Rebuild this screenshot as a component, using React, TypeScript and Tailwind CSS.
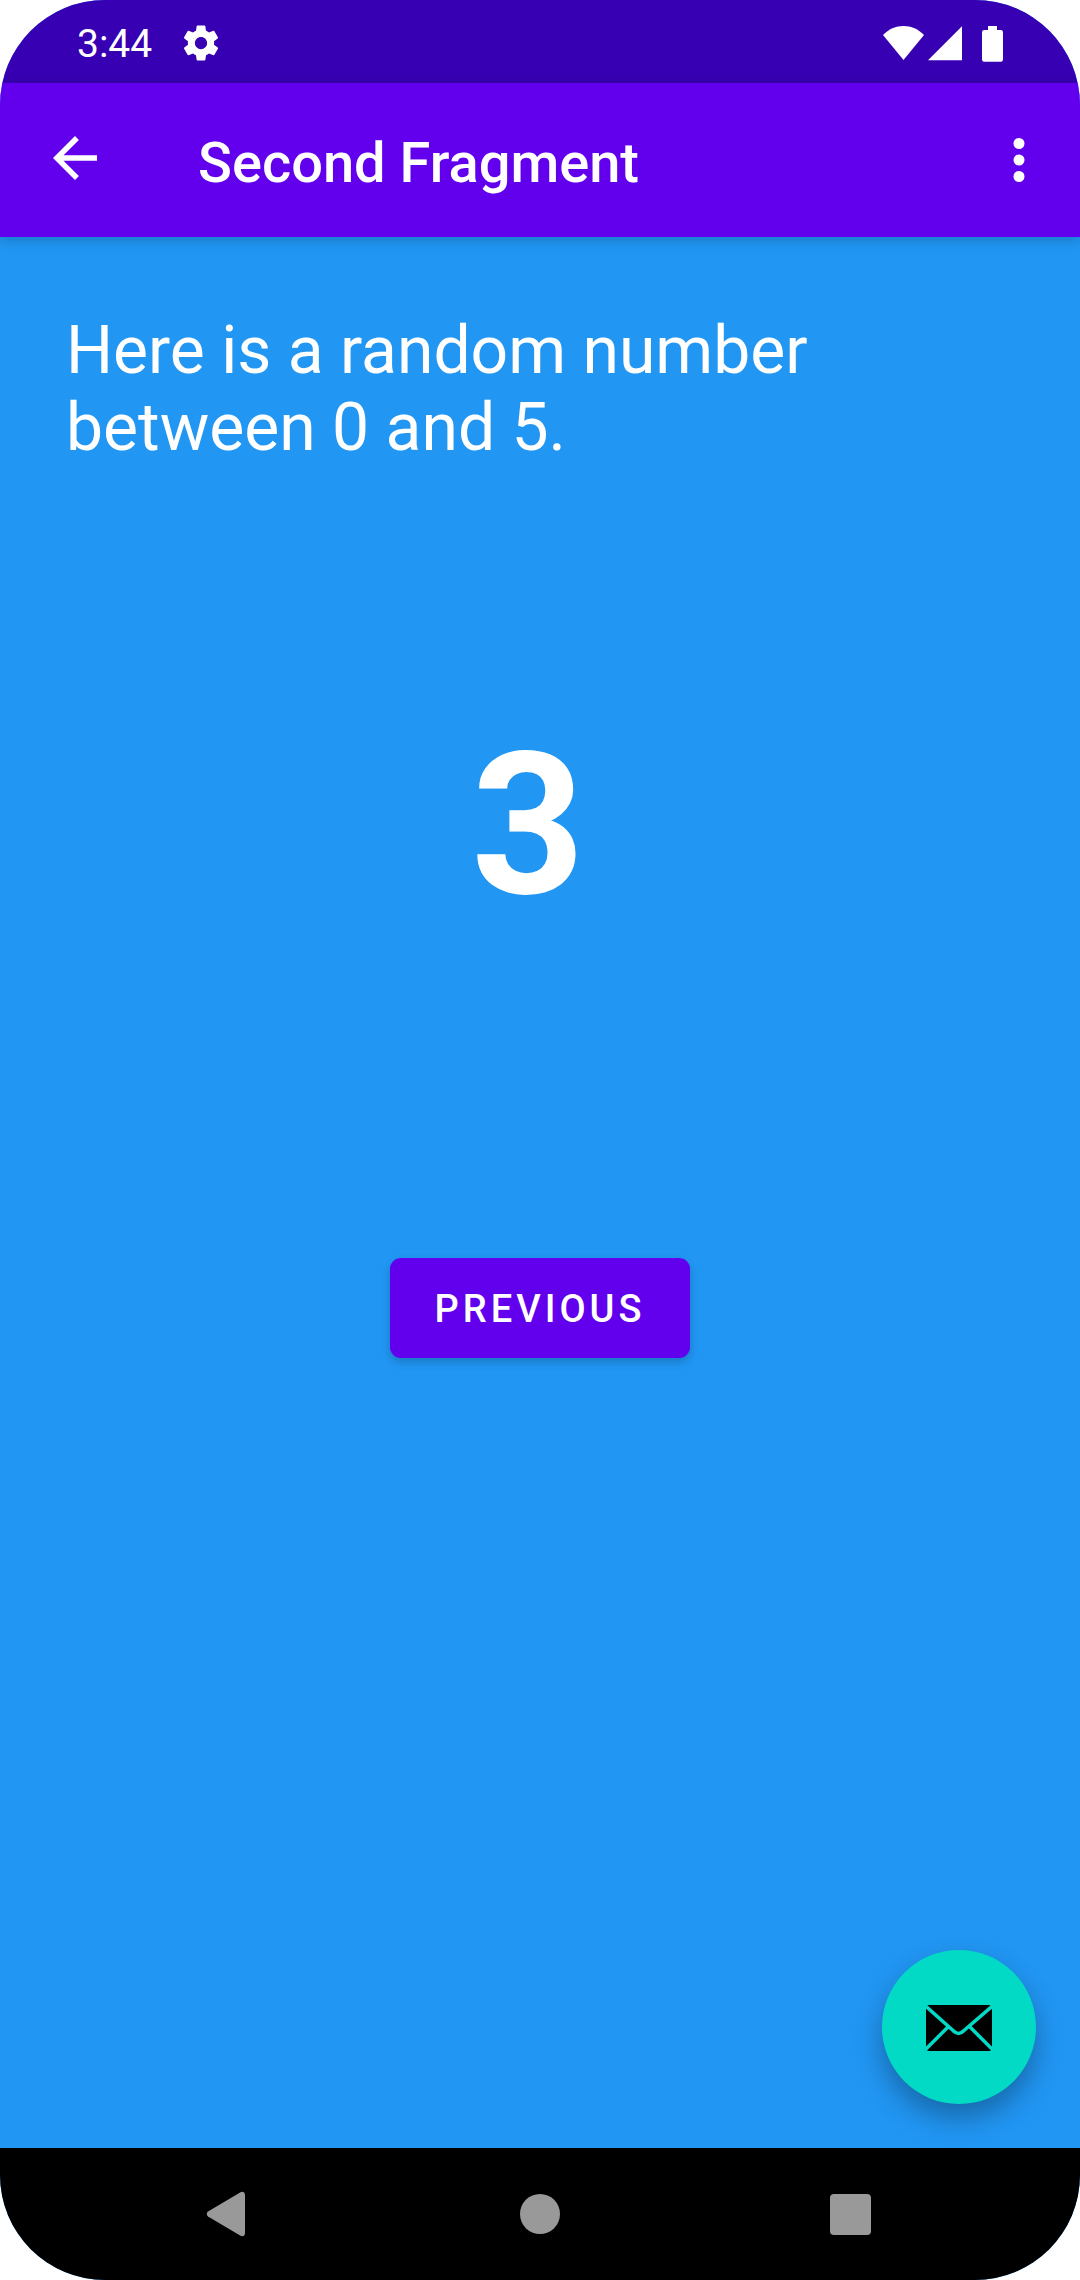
import type { ReactNode } from "react";

function StatusBar() {
  return (
    <div className="flex h-[83px] items-center justify-between bg-[#3700b3] px-[77px]">
      <div className="flex items-center gap-7 pt-[5px]">
        <span className="text-[39px] leading-[46px]">3:44</span>
        <svg viewBox="0 0 24 24" className="-mt-[3px] size-[42px] fill-white" role="img" aria-label="Settings">
          <path d="M19.43 12.98c.04-.32.07-.64.07-.98s-.03-.66-.07-.98l2.11-1.65c.19-.15.24-.42.12-.64l-2-3.46c-.12-.22-.39-.3-.61-.22l-2.49 1c-.52-.4-1.08-.73-1.69-.98l-.38-2.65C14.46 2.18 14.25 2 14 2h-4c-.25 0-.46.18-.49.42l-.38 2.65c-.61.25-1.17.59-1.69.98l-2.49-1c-.23-.09-.49 0-.61.22l-2 3.46c-.13.22-.07.49.12.64l2.11 1.65c-.04.32-.07.65-.07.98s.03.66.07.98l-2.11 1.65c-.19.15-.24.42-.12.64l2 3.46c.12.22.39.3.61.22l2.49-1c.52.4 1.08.73 1.69.98l.38 2.65c.03.24.24.42.49.42h4c.25 0 .46-.18.49-.42l.38-2.65c.61-.25 1.17-.59 1.69-.98l2.49 1c.23.09.49 0 .61-.22l2-3.46c.12-.22.07-.49-.12-.64l-2.11-1.65zM12 15.5c-1.93 0-3.5-1.57-3.5-3.5s1.57-3.5 3.5-3.5 3.5 1.57 3.5 3.5-1.57 3.5-3.5 3.5z" />
        </svg>
      </div>
      <div className="flex items-center gap-1 pt-1">
        <svg viewBox="0 0 41 36" className="h-9 w-[41px] fill-white" role="img" aria-label="Wi-Fi">
          <path d="M0 9C5.5 3.2 13 0 20.5 0S35.500 3.200 41 9L20.500 34z" />
        </svg>
        <svg viewBox="0 0 34 36" className="h-9 w-[34px] fill-white" role="img" aria-label="Mobile signal">
          <path d="M34 .3V34.300H0z" />
        </svg>
        <svg viewBox="0 0 21 36" className="ml-4 h-9 w-[21px] fill-white" role="img" aria-label="Battery">
          <path d="M6 0h9v4h3.800a2.200 2.200 0 0 1 2.200 2.200v27.300a2.200 2.200 0 0 1-2.200 2.200H2.200A2.200 2.200 0 0 1 0 33.500V6.200A2.200 2.200 0 0 1 2.200 4H6z" />
        </svg>
      </div>
    </div>
  );
}

function AppBar() {
  return (
    <header className="relative flex h-[154px] items-center bg-[#6200ee] shadow-[0_3px_12px_rgba(0,0,0,0.2)]">
      <button type="button" aria-label="Navigate up" className="flex size-[150px] items-center justify-center self-start">
        <svg viewBox="0 0 24 24" className="size-[66px] fill-white" aria-hidden="true">
          <path d="M20 11H7.830l5.590-5.590L12 4l-8 8 8 8 1.410-1.410L7.830 13H20v-2z" />
        </svg>
      </button>
      <h1 className="ml-12 flex-1 pt-1.5 text-[56px] leading-[64px] font-medium">Second Fragment</h1>
      <button type="button" aria-label="More options" className="mr-[11px] flex h-full w-[100px] items-center justify-center">
        <svg viewBox="0 0 24 24" className="size-[66px] fill-white" aria-hidden="true">
          <circle cx="12" cy="6" r="2" />
          <circle cx="12" cy="12" r="2" />
          <circle cx="12" cy="18" r="2" />
        </svg>
      </button>
    </header>
  );
}

function MailIcon() {
  return (
    <svg viewBox="0 0 66 46" className="h-[46px] w-[66px]" aria-hidden="true">
      <rect width="66" height="46" rx="3" fill="#000" />
      <g fill="none" stroke="#03dac5" strokeWidth="3.5">
        <path d="M-1 .5 27 25.500Q32.500 31.500 38 25.500L67 .5" />
        <path d="M22.500 21.500-1 45M43.500 21.500 67 45" />
      </g>
    </svg>
  );
}

function NavButton({ label, children }: { label: string; children: ReactNode }) {
  return (
    <button type="button" aria-label={label} className="flex h-full flex-1 items-center justify-center">
      <svg viewBox="0 0 48 48" className="size-12 fill-[#999999]" aria-hidden="true">
        {children}
      </svg>
    </button>
  );
}

export default function App() {
  return (
    <div className="min-h-screen bg-white">
      <div className="flex min-h-screen flex-col overflow-hidden rounded-[105px] bg-[#2196f3] font-['Roboto',sans-serif] text-white">
        <StatusBar />
        <AppBar />
        <main className="relative flex flex-1 flex-col items-center">
          <p className="w-full px-[66px] pt-[75px] text-[66px] leading-[77px]">
            Here is a random number between 0 and 5.
          </p>
          <p className="mt-[243px] pr-6 text-[198px] leading-[232px] font-bold">3</p>
          <button
            type="button"
            className="mt-[317px] h-[100px] rounded-[11px] bg-[#6200ee] px-[45px] pt-0.5 text-[38px] leading-[46px] font-medium tracking-[4px] uppercase shadow-[0_4px_8px_rgba(0,0,0,0.2)]"
          >
            Previous
          </button>
          <button
            type="button"
            aria-label="Send mail"
            className="absolute right-11 bottom-11 flex size-[154px] items-center justify-center rounded-full bg-[#03dac5] pt-0.5 shadow-[0_14px_28px_rgba(0,0,0,0.3)]"
          >
            <MailIcon />
          </button>
        </main>
        <nav className="relative flex h-[132px] bg-black px-[74px]">
          <NavButton label="Back">
            <path d="M3 21.500 35.500 2.200Q39.500 .600 40 5V43Q39.500 47.400 35.500 45.800L3 26.500Q.500 24 3 21.500z" />
          </NavButton>
          <NavButton label="Home">
            <circle cx="24" cy="24" r="20" />
          </NavButton>
          <NavButton label="Overview">
            <rect x="3" y="4" width="41" height="41" rx="4" />
          </NavButton>
        </nav>
      </div>
    </div>
  );
}
